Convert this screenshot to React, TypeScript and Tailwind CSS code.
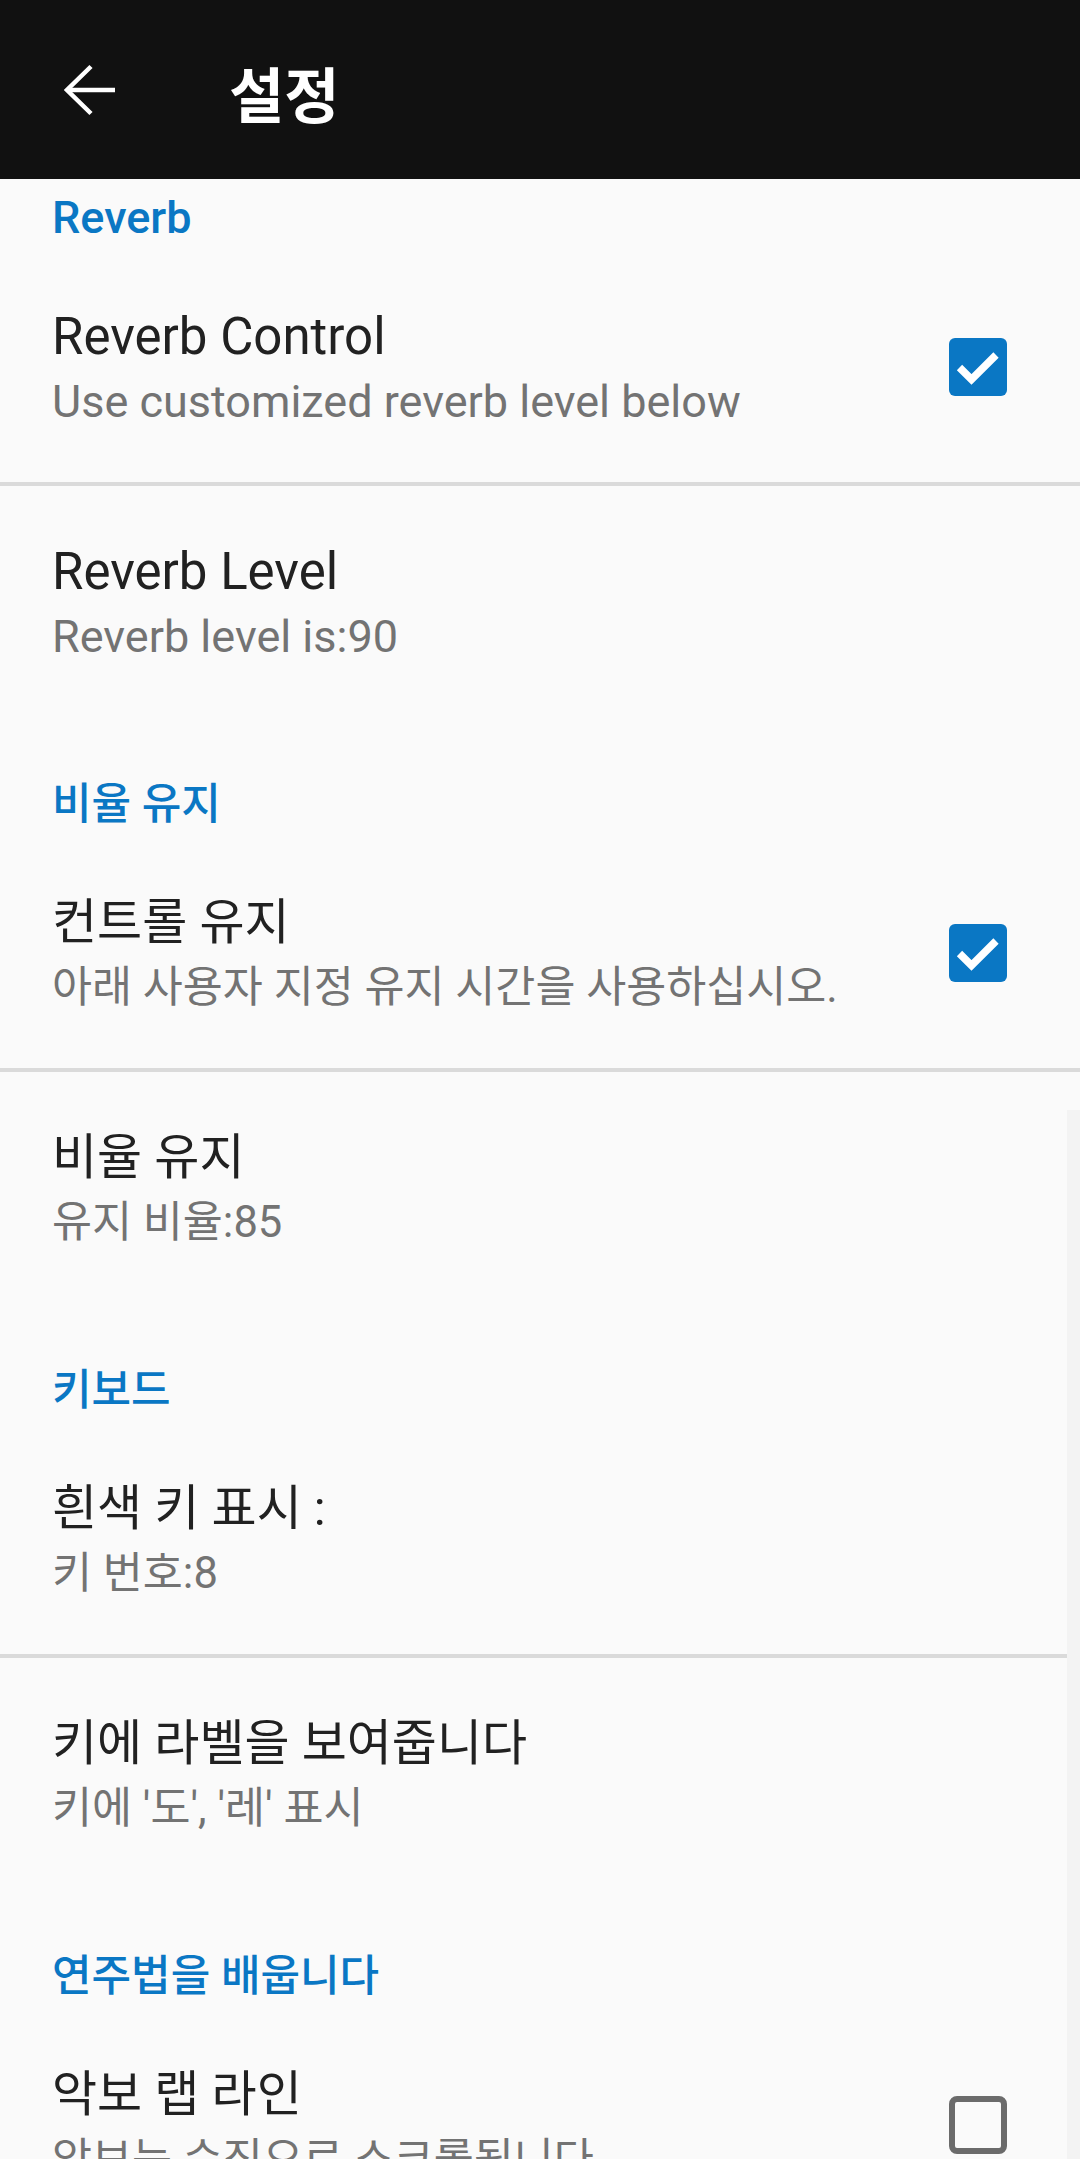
import React from 'react';

type Pref = {
  kind: 'item';
  title: string;
  summary: string;
  check?: boolean;
  divider?: boolean;
};
type Cat = { kind: 'cat'; label: string; first?: boolean };

const rows: Array<Pref | Cat> = [
  { kind: 'cat', label: 'Reverb', first: true },
  { kind: 'item', title: 'Reverb Control', summary: 'Use customized reverb level below', check: true, divider: true },
  { kind: 'item', title: 'Reverb Level', summary: 'Reverb level is:90' },
  { kind: 'cat', label: '비율 유지' },
  { kind: 'item', title: '컨트롤 유지', summary: '아래 사용자 지정 유지 시간을 사용하십시오.', check: true, divider: true },
  { kind: 'item', title: '비율 유지', summary: '유지 비율:85' },
  { kind: 'cat', label: '키보드' },
  { kind: 'item', title: '흰색 키 표시 :', summary: '키 번호:8', divider: true },
  { kind: 'item', title: '키에 라벨을 보여줍니다', summary: "키에 '도', '레' 표시" },
  { kind: 'cat', label: '연주법을 배웁니다' },
  { kind: 'item', title: '악보 랩 라인', summary: '악보는 수직으로 스크롤됩니다', check: false },
];

// korean glyphs on the device run a bit narrower than roboto, size them apart
const isKo = (s: string) => /[\uac00-\ud7a3]/.test(s);

function CheckBox({ on }: { on: boolean }) {
  if (on) {
    return (
      <svg width="58" height="58" viewBox="0 0 58 58" className="shrink-0">
        <rect x="0" y="0" width="58" height="58" rx="6" fill="#0a77c4" />
        <polyline points="10.5,29.5 22.5,41.5 47,17" fill="none" stroke="#ffffff" strokeWidth="7.5" />
      </svg>
    );
  }
  return (
    <svg width="58" height="58" viewBox="0 0 58 58" className="shrink-0">
      <rect x="3" y="3" width="52" height="52" rx="5" fill="none" stroke="#6b6b6b" strokeWidth="6" />
    </svg>
  );
}

export default function App() {
  return (
    <div
      className="relative h-[2159px] w-[1080px] overflow-hidden bg-[#fafafa]"
      style={{ fontFamily: 'Roboto, "Noto Sans CJK KR", sans-serif' }}
    >
      <header className="flex h-[179px] items-center bg-[#111111]">
        <svg width="52" height="52" viewBox="0 0 52 52" className="ml-[64px]">
          <polyline points="27,2.5 3,26 27,49.5" fill="none" stroke="#ffffff" strokeWidth="4.5" />
          <line x1="3" y1="26" x2="51" y2="26" stroke="#ffffff" strokeWidth="4.5" />
        </svg>
        <h1 className="ml-[113px] mt-[4px] text-[60px] font-bold leading-none text-white" style={{ fontFamily: '"Noto Sans CJK KR", sans-serif' }}>
          설정
        </h1>
      </header>

      <div className="flex flex-col">
        {rows.map((r, i) =>
          r.kind === 'cat' ? (
            <div
              key={i}
              className={[
                'pl-[52px] pb-[8px] font-medium leading-[50px] text-[#0a77c4]',
                r.first ? 'pt-[14px]' : 'pt-[62px]',
                isKo(r.label) ? 'text-[43px]' : 'text-[45px]',
              ].join(' ')}
            >
              {r.label}
            </div>
          ) : (
            <React.Fragment key={i}>
              <div className="flex items-center pl-[52px] pr-[73px] pt-[51px] pb-[50px]">
                <div className="flex min-w-0 flex-1 flex-col">
                  <span
                    className={[
                      'whitespace-nowrap leading-[70px] text-[#212121]',
                      isKo(r.title) ? 'text-[49px]' : 'text-[51px]',
                    ].join(' ')}
                  >
                    {r.title}
                  </span>
                  <span
                    className={[
                      'whitespace-nowrap leading-[60px] text-[#737373]',
                      isKo(r.summary) ? 'text-[43.5px]' : 'text-[45px]',
                    ].join(' ')}
                  >
                    {r.summary}
                  </span>
                </div>
                {r.check !== undefined && <CheckBox on={r.check} />}
              </div>
              {r.divider && <div className="h-[4px] bg-[#dadada]" />}
            </React.Fragment>
          )
        )}
      </div>

      {/* faint scroll track on the right edge */}
      <div className="absolute right-0 top-[1110px] bottom-0 w-[13px] bg-[#f3f3f3]" />
    </div>
  );
}
